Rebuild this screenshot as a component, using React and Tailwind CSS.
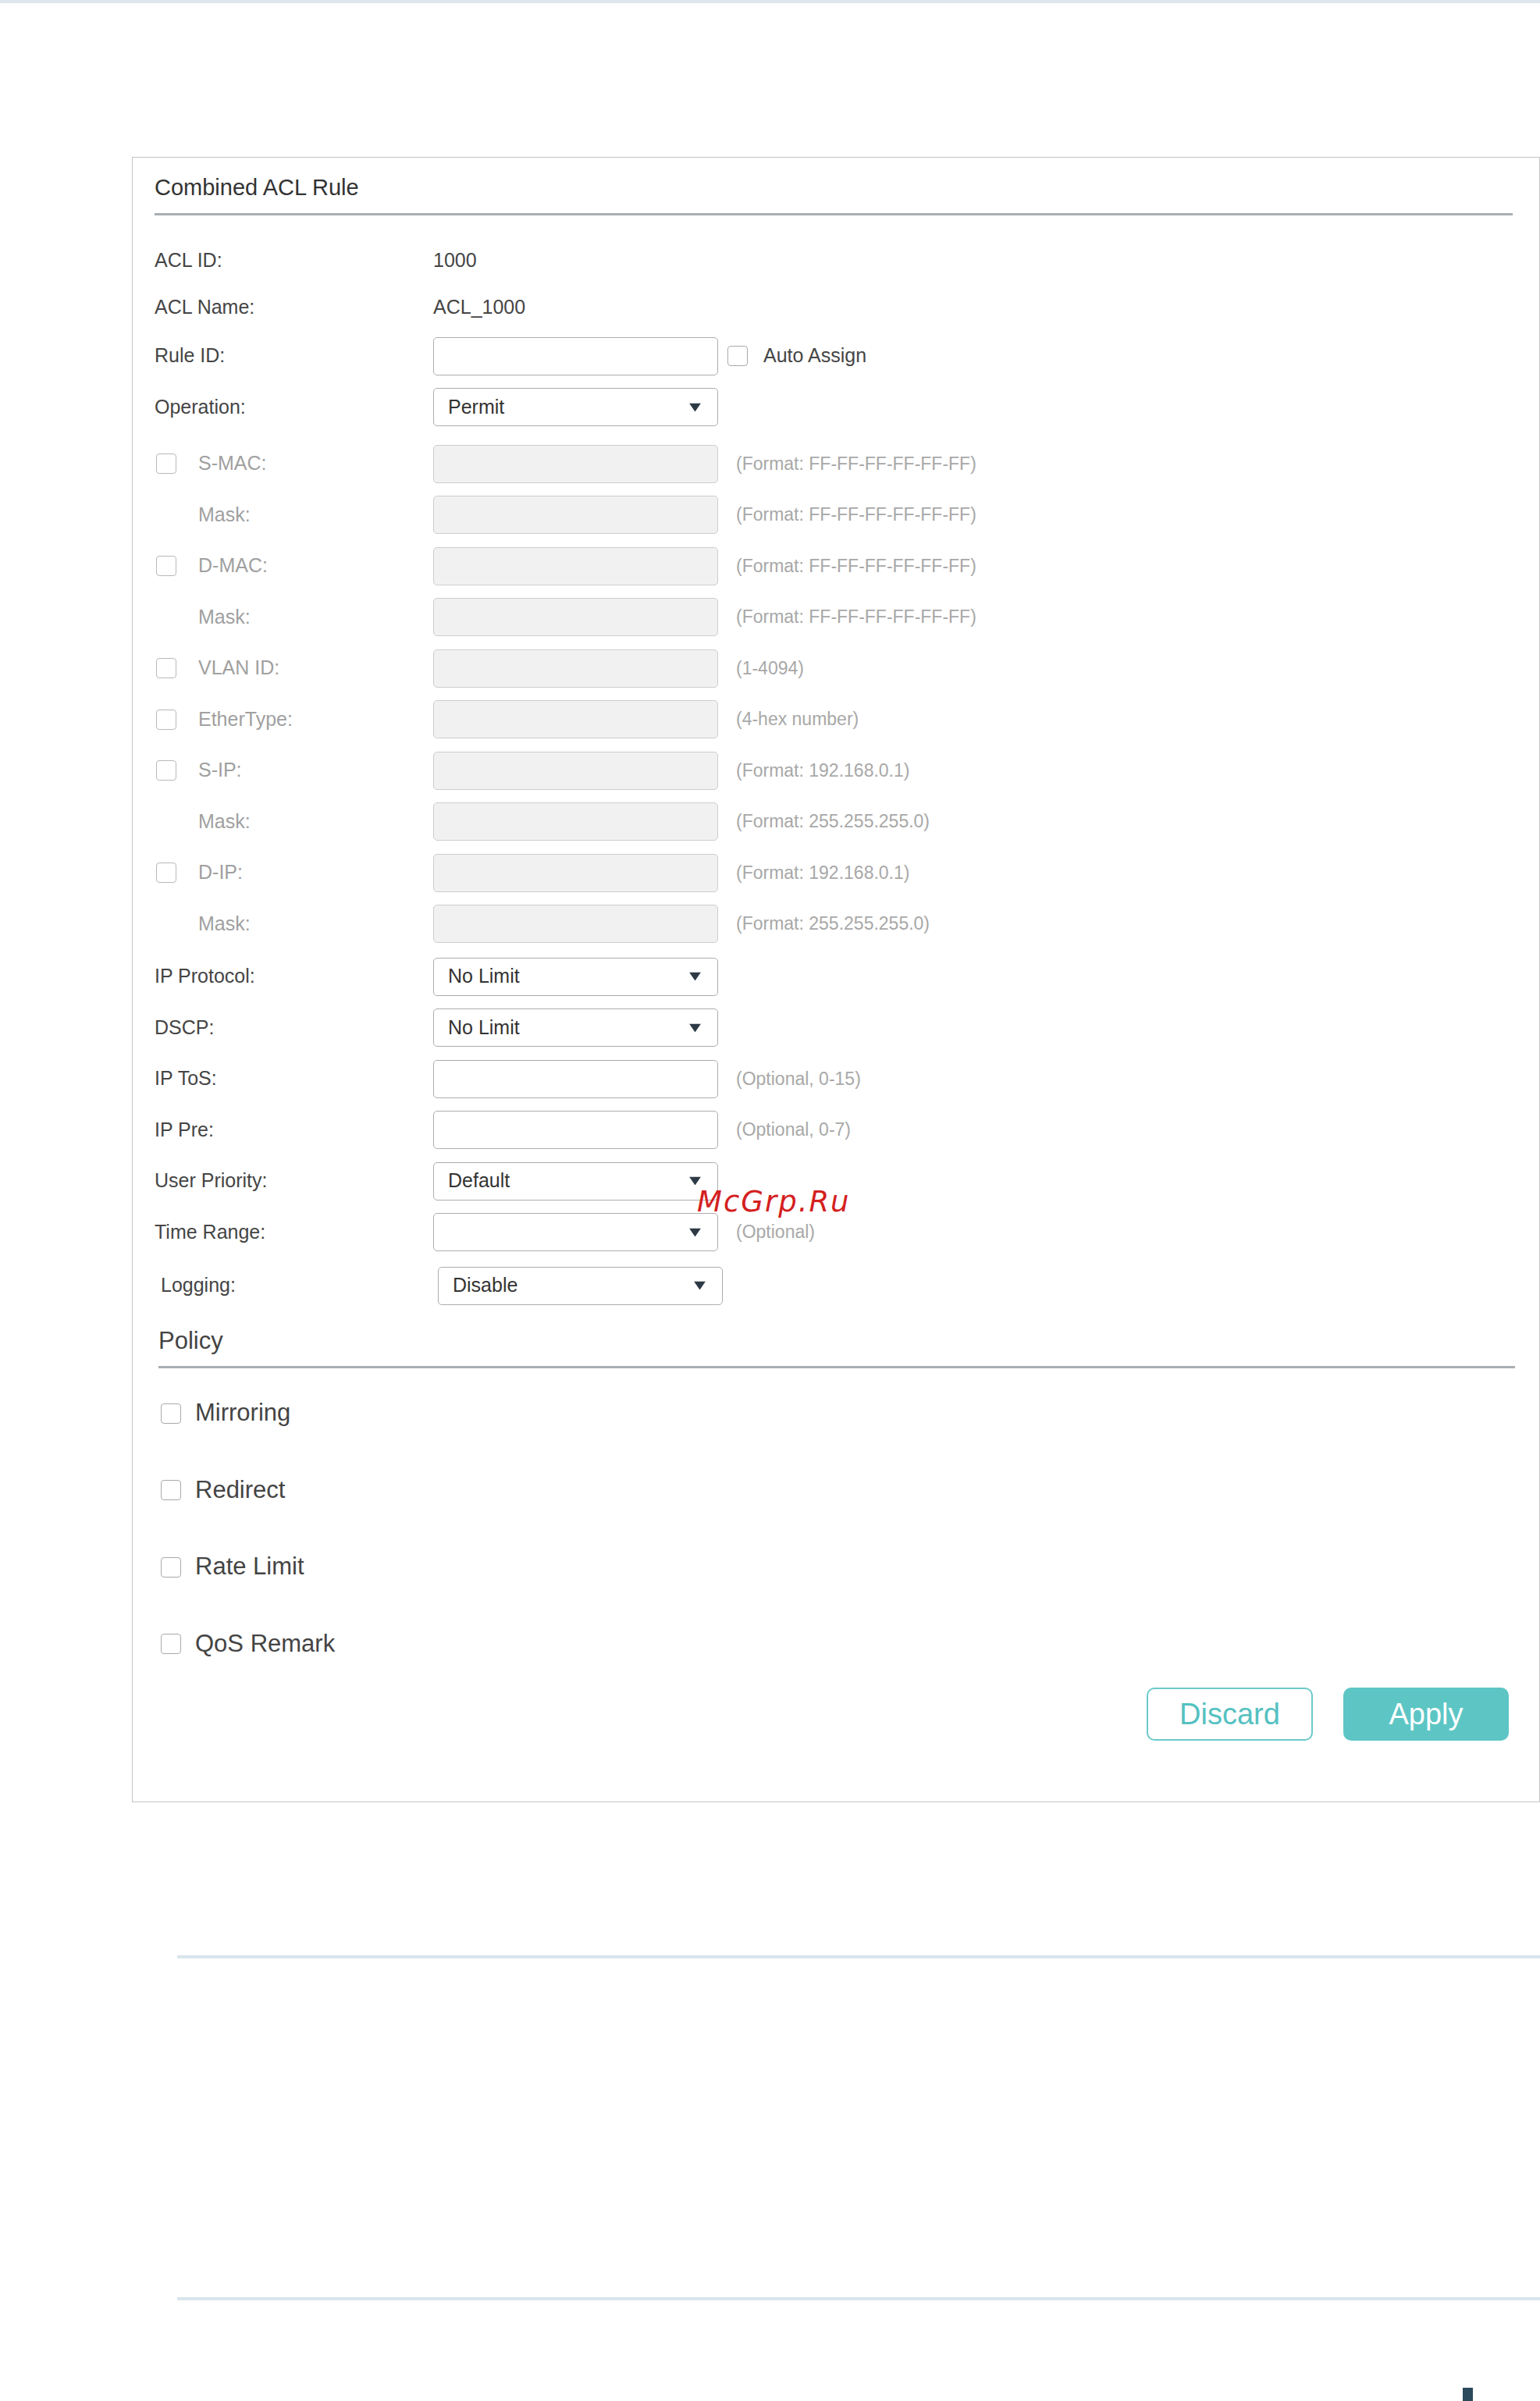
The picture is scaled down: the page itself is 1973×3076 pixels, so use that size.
import React from "react";

const Arrow = () => (
  <svg width="15" height="11" viewBox="0 0 15 11" className="absolute right-[21px] top-1/2 -translate-y-1/2">
    <path d="M0 0 H15 L7.5 11 Z" fill="#2d3a46" />
  </svg>
);

const Box = ({ light }) => (
  <span
    className={
      "inline-block w-[26px] h-[26px] rounded-[4px] border-[1.5px] bg-white shrink-0 " +
      (light ? "border-[#b9b9b9]" : "border-[#a9a9a9]")
    }
  />
);

const TextRow = ({ label, value, h }) => (
  <div className={"flex items-center " + h}>
    <span className="w-[357px] text-[25px] text-[#454545]">{label}</span>
    <span className="text-[25px] text-[#454545]">{value}</span>
  </div>
);

const Input = ({ disabled }) => (
  <div
    className={
      "w-[365px] h-[49px] rounded-[5px] border-[1.5px] shrink-0 " +
      (disabled ? "bg-[#f1f1f1] border-[#cdcdcd]" : "bg-white border-[#adadad]")
    }
  />
);

const Select = ({ value }) => (
  <div className="relative w-[365px] h-[49px] rounded-[5px] border-[1.5px] border-[#adadad] bg-white shrink-0 flex items-center pl-[18px] text-[25px] text-[#333]">
    {value}
    <Arrow />
  </div>
);

const Hint = ({ children }) => (
  <span className="ml-[23px] text-[23px] text-[#a8a8a8]">{children}</span>
);

const DisRow = ({ label, check, hint, extra = "" }) => (
  <div className={"flex items-center h-[49px] " + extra}>
    <div className="w-[357px] flex items-center">
      {check ? (
        <span className="ml-[2px] mr-[28px] flex"><Box light /></span>
      ) : (
        <span className="w-[56px]" />
      )}
      <span className="text-[25px] text-[#a0a0a0]">{label}</span>
    </div>
    <Input disabled />
    <Hint>{hint}</Hint>
  </div>
);

const PlainRow = ({ label, children, hint, extra = "" }) => (
  <div className={"flex items-center h-[49px] " + extra}>
    <span className="w-[357px] text-[25px] text-[#454545]">{label}</span>
    {children}
    {hint ? <Hint>{hint}</Hint> : null}
  </div>
);

const PolicyItem = ({ label }) => (
  <div className="flex items-center h-[40px] ml-[8px]">
    <Box />
    <span className="ml-[18px] text-[31px] text-[#444]">{label}</span>
  </div>
);

export default function App() {
  return (
    <div className="relative w-[1973px] h-[3076px] bg-white overflow-hidden font-['Liberation_Sans',Arial,sans-serif]">
      <div className="h-[4px] bg-[#dde7ed]" />

      <div className="ml-[169px] mt-[197px] w-[1804px] h-[2108px] border border-[#c4c4c4] box-border pl-[28px] pr-[34px] pt-[21px] flex flex-col">
        <div className="text-[29px] leading-[34px] text-[#333]">Combined ACL Rule</div>
        <div className="mt-[16px] h-[3px] bg-[#a9afb4]" />

        <div className="mt-[36.5px] flex flex-col gap-[16.5px]">
          <TextRow label="ACL ID:" value="1000" h="h-[43px]" />
          <TextRow label="ACL Name:" value="ACL_1000" h="h-[43px]" />
          <PlainRow label="Rule ID:">
            <Input />
            <span className="ml-[12px] flex"><Box /></span>
            <span className="ml-[20px] text-[25px] text-[#454545]">Auto Assign</span>
          </PlainRow>
          <PlainRow label="Operation:">
            <Select value="Permit" />
          </PlainRow>
          <DisRow label="S-MAC:" check hint="(Format: FF-FF-FF-FF-FF-FF)" extra="mt-[7px]" />
          <DisRow label="Mask:" hint="(Format: FF-FF-FF-FF-FF-FF)" />
          <DisRow label="D-MAC:" check hint="(Format: FF-FF-FF-FF-FF-FF)" />
          <DisRow label="Mask:" hint="(Format: FF-FF-FF-FF-FF-FF)" />
          <DisRow label="VLAN ID:" check hint="(1-4094)" />
          <DisRow label="EtherType:" check hint="(4-hex number)" />
          <DisRow label="S-IP:" check hint="(Format: 192.168.0.1)" />
          <DisRow label="Mask:" hint="(Format: 255.255.255.0)" />
          <DisRow label="D-IP:" check hint="(Format: 192.168.0.1)" />
          <DisRow label="Mask:" hint="(Format: 255.255.255.0)" />
          <PlainRow label="IP Protocol:" extra="mt-[2px]">
            <Select value="No Limit" />
          </PlainRow>
          <PlainRow label="DSCP:">
            <Select value="No Limit" />
          </PlainRow>
          <PlainRow label="IP ToS:" hint="(Optional, 0-15)">
            <Input />
          </PlainRow>
          <PlainRow label="IP Pre:" hint="(Optional, 0-7)">
            <Input />
          </PlainRow>
          <PlainRow label="User Priority:">
            <Select value="Default" />
          </PlainRow>
          <PlainRow label="Time Range:" hint="(Optional)">
            <Select value="" />
          </PlainRow>
          <div className="flex items-center h-[49px] mt-[3px]">
            <span className="w-[363px] pl-[8px] text-[25px] text-[#454545]">Logging:</span>
            <Select value="Disable" />
          </div>
        </div>

        <div className="mt-[28px] ml-[5px] text-[31px] leading-[36px] text-[#444]">Policy</div>
        <div className="mt-[14px] ml-[5px] -mr-[3px] h-[3px] bg-[#a9afb4]" />

        <div className="mt-[38px] flex flex-col gap-[58.5px]">
          <PolicyItem label="Mirroring" />
          <PolicyItem label="Redirect" />
          <PolicyItem label="Rate Limit" />
          <PolicyItem label="QoS Remark" />
        </div>

        <div className="mt-[36px] mr-[5px] flex justify-end gap-[39px]">
          <button className="w-[213px] h-[68px] rounded-[10px] border-2 border-[#6ccaca] bg-white text-[38px] text-[#55c1c1] flex items-center justify-center">
            Discard
          </button>
          <button className="w-[212px] h-[68px] rounded-[10px] bg-[#5dc6c5] text-[38px] text-white flex items-center justify-center">
            Apply
          </button>
        </div>
      </div>

      <div className="mt-[196px] ml-[227px] h-[4px] bg-[#d9e5ec]" />
      <div className="mt-[434px] ml-[227px] h-[4px] bg-[#d9e5ec]" />
      <div className="mt-[112px] ml-[1874px] w-[13px] h-[17px] bg-[#2b4a5c]" />

      <div className="absolute left-[893px] top-[1521px] text-[37px] leading-none italic tracking-[2px] text-[#d42020] font-['DejaVu_Sans',sans-serif]">
        McGrp.Ru
      </div>
    </div>
  );
}
